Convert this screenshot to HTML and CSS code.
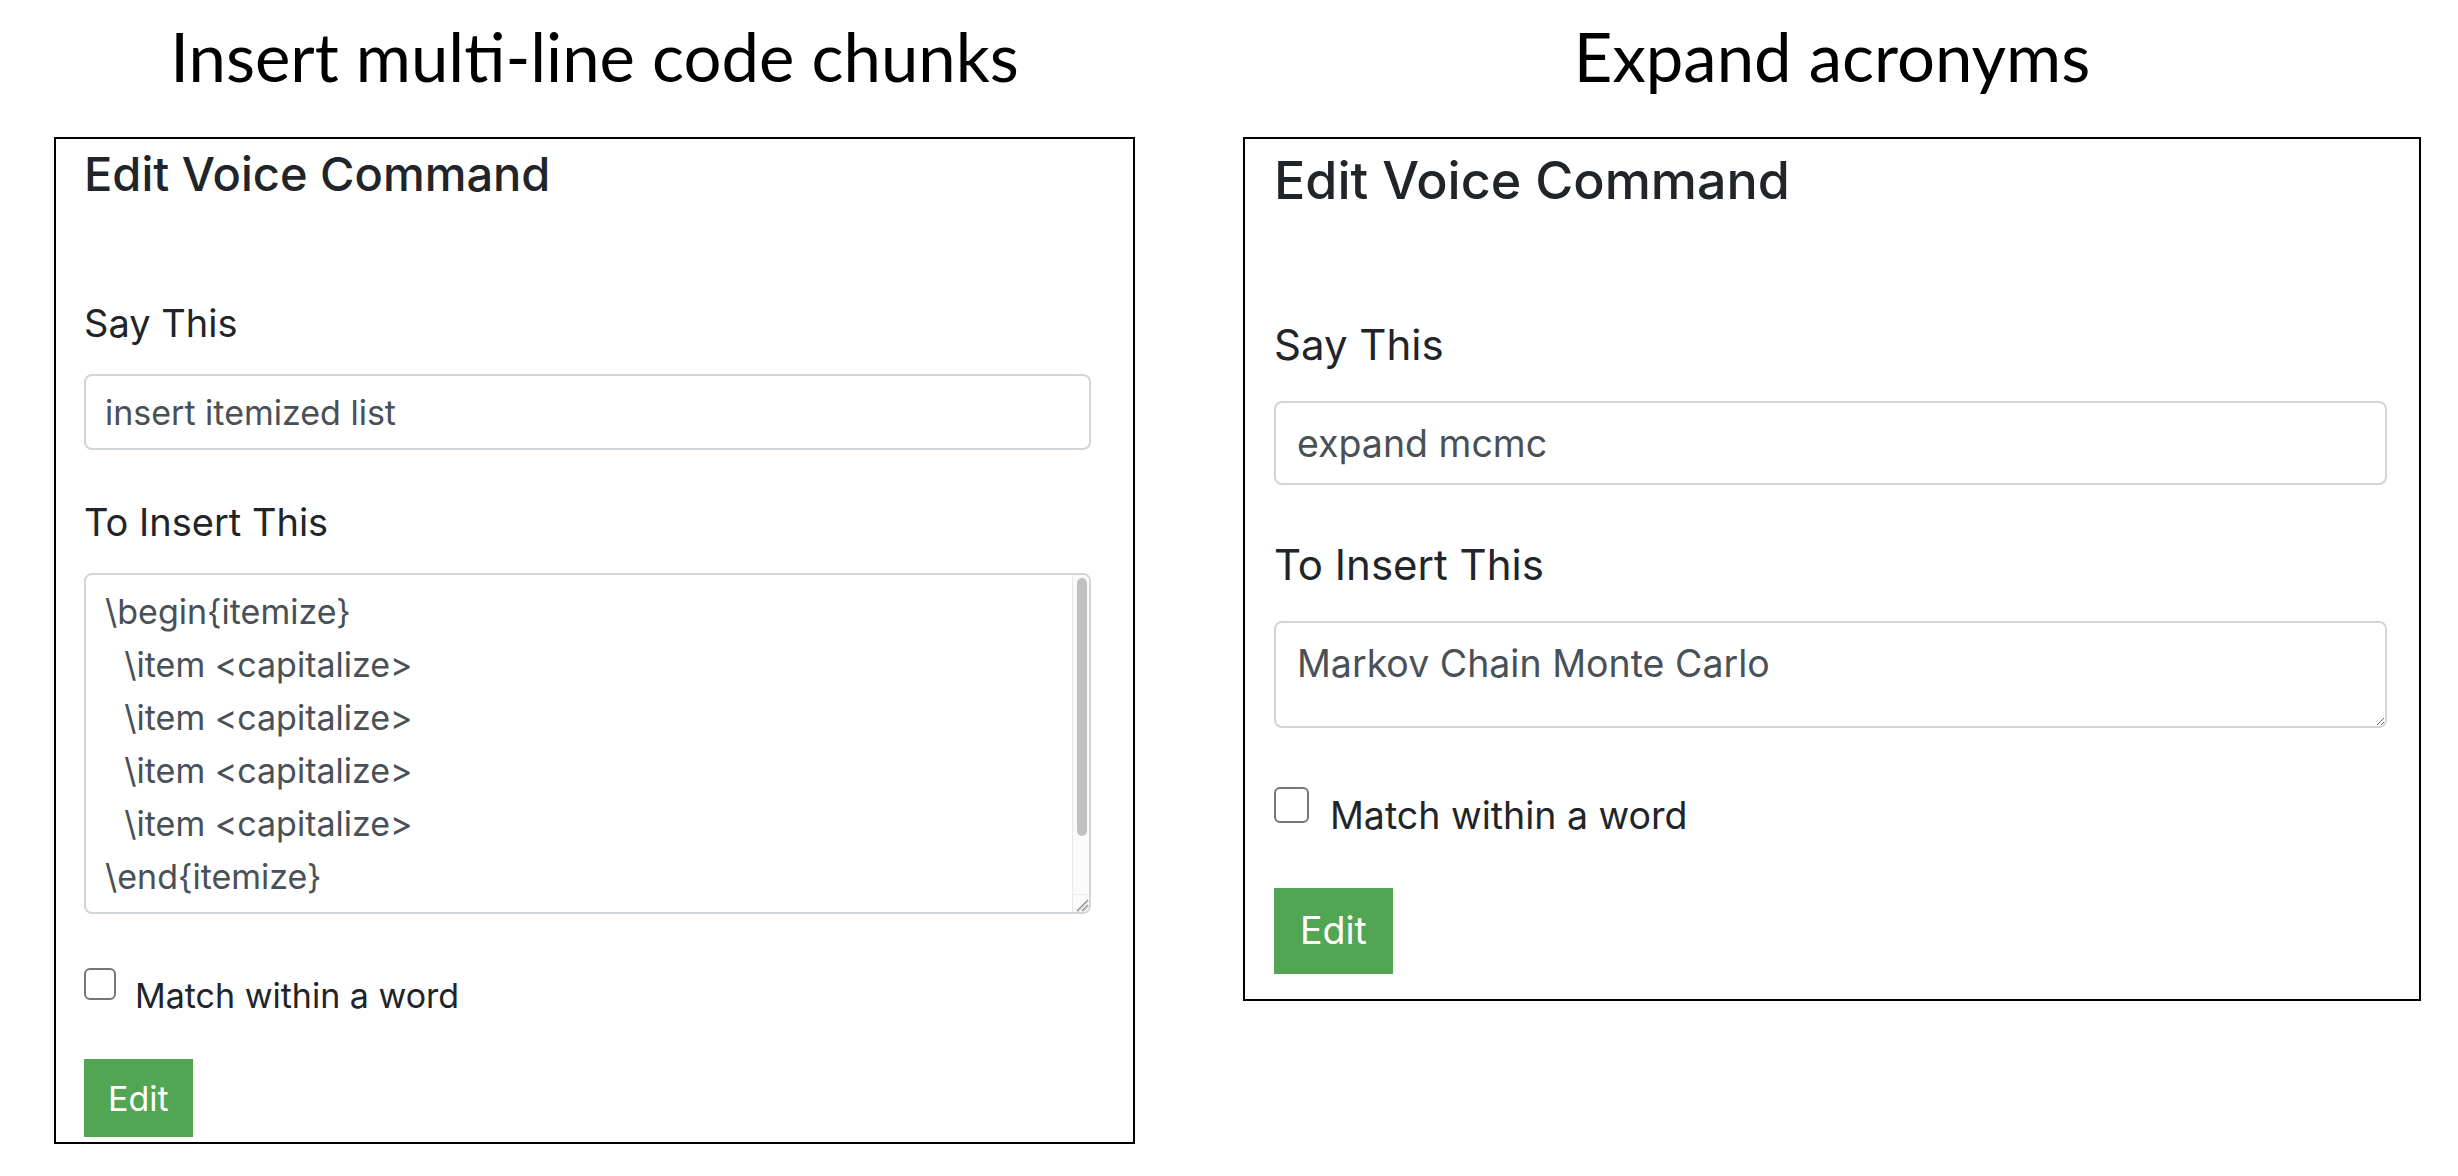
FILE: index.html
```html
<!DOCTYPE html>
<html lang="en">
<head>
<meta charset="utf-8">
<title>Voice command examples</title>
<link rel="stylesheet" href="styles.css">
</head>
<body>
<main class="page">
  <section class="demo demo--left">
    <h2 class="demo-title">Insert multi-line code chunks</h2>
    <form class="card">
      <h4 class="card-title">Edit Voice Command</h4>
      <div class="form-group">
        <label class="form-label" for="say-1">Say This</label>
        <input class="form-control" id="say-1" type="text" value="insert itemized list">
      </div>
      <div class="form-group">
        <label class="form-label" for="insert-1">To Insert This</label>
        <div class="textarea-wrap">
          <textarea class="form-control form-textarea form-textarea--scroll" id="insert-1">\begin{itemize}
  \item &lt;capitalize&gt;
  \item &lt;capitalize&gt;
  \item &lt;capitalize&gt;
  \item &lt;capitalize&gt;
\end{itemize}

</textarea>
          <div class="fake-scrollbar" aria-hidden="true"><div class="fake-thumb"></div></div>
          <div class="fake-corner" aria-hidden="true">
            <svg class="resize-glyph" viewBox="0 0 16 16" width="16" height="16">
              <line x1="4" y1="15" x2="15" y2="4" stroke="#8c8c8c" stroke-width="1.2"/>
              <line x1="9" y1="15" x2="15" y2="9" stroke="#8c8c8c" stroke-width="1.2"/>
              <line x1="5" y1="16" x2="16" y2="5" stroke="#d8d8d8" stroke-width="1"/>
              <line x1="10" y1="16" x2="16" y2="10" stroke="#d8d8d8" stroke-width="1"/>
            </svg>
          </div>
        </div>
      </div>
      <div class="form-check">
        <input class="check-input" type="checkbox" id="match-1">
        <label class="check-label" for="match-1">Match within a word</label>
      </div>
      <button class="btn" type="button">Edit</button>
    </form>
  </section>

  <section class="demo demo--right">
    <h2 class="demo-title">Expand acronyms</h2>
    <form class="card">
      <h4 class="card-title">Edit Voice Command</h4>
      <div class="form-group">
        <label class="form-label" for="say-2">Say This</label>
        <input class="form-control" id="say-2" type="text" value="expand mcmc">
      </div>
      <div class="form-group">
        <label class="form-label" for="insert-2">To Insert This</label>
        <textarea class="form-control form-textarea" id="insert-2">Markov Chain Monte Carlo</textarea>
      </div>
      <div class="form-check">
        <input class="check-input" type="checkbox" id="match-2">
        <label class="check-label" for="match-2">Match within a word</label>
      </div>
      <button class="btn" type="button">Edit</button>
    </form>
  </section>
</main>
</body>
</html>
```

FILE: styles.css
```css
* {
  box-sizing: border-box;
}

html,
body {
  margin: 0;
  background: #ffffff;
}

body {
  font-family: Inter, "Noto Sans", "Liberation Sans", sans-serif;
  color: #212529;
}

.page {
  display: flex;
  align-items: flex-start;
  gap: 108px;
  padding-left: 54px;
}

.demo {
  display: flex;
  flex-direction: column;
}

.demo--left {
  width: 1081px;
}

.demo--right {
  width: 1178px;
}

.demo-title {
  margin: 0 0 41px;
  padding-top: 16px;
  font-family: Lato, "Open Sans", sans-serif;
  font-size: 67px;
  font-weight: 400;
  line-height: 80px;
  color: #000000;
  text-align: center;
}

.card {
  display: flex;
  flex-direction: column;
  align-items: stretch;
  border: 2px solid #000000;
  background: #ffffff;
}

.card-title {
  margin: 0;
  font-weight: 500;
  color: #212529;
}

.form-label {
  display: block;
  font-weight: 400;
  color: #212529;
}

.form-control {
  display: block;
  width: 100%;
  margin: 0;
  border: 2px solid #d0d5da;
  border-radius: 8px;
  background: #ffffff;
  font-family: Inter, "Noto Sans", "Liberation Sans", sans-serif;
  color: #495057;
  outline: none;
}

.form-textarea {
  resize: vertical;
  overflow-y: auto;
}

.form-textarea--scroll {
  overflow-y: hidden;
}

.textarea-wrap {
  position: relative;
}

.fake-scrollbar {
  position: absolute;
  top: 2px;
  right: 2px;
  width: 17px;
  height: 319px;
  background: #fafafa;
  border-left: 1px solid #e8e8e8;
  border-top-right-radius: 6px;
  pointer-events: none;
}

.fake-thumb {
  position: absolute;
  top: 3px;
  left: 4px;
  width: 10px;
  height: 258px;
  border-radius: 5px;
  background: #c1c1c1;
}

.fake-corner {
  position: absolute;
  right: 2px;
  bottom: 2px;
  width: 17px;
  height: 18px;
  display: flex;
  align-items: flex-end;
  justify-content: flex-end;
  background: #fafafa;
  border-left: 1px solid #e8e8e8;
  border-top: 1px solid #ededed;
  border-bottom-right-radius: 6px;
  pointer-events: none;
}

.resize-glyph {
  display: block;
}

.form-check {
  display: flex;
  align-items: flex-start;
}

.check-input {
  appearance: none;
  -webkit-appearance: none;
  flex: none;
  border: 2px solid #767676;
  border-radius: 6px;
  background: #ffffff;
}

.check-label {
  color: #212529;
}

.btn {
  align-self: flex-start;
  border: none;
  border-radius: 0;
  background: #52a553;
  color: #ffffff;
  font-family: Inter, "Noto Sans", "Liberation Sans", sans-serif;
  font-weight: 400;
  cursor: pointer;
}

/* Left card sizes */
.demo--left .card {
  padding: 7px 42px 5px 28px;
}

.demo--left .card-title {
  font-size: 47px;
  line-height: 56px;
  margin-bottom: 93px;
}

.demo--left .form-label {
  font-size: 38px;
  line-height: 57px;
  margin-bottom: 22px;
}

.demo--left .form-group {
  margin-bottom: 44px;
}

.demo--left .form-control {
  height: 76px;
  padding: 0 19px;
  font-size: 34px;
  line-height: 51px;
}

.demo--left .form-textarea {
  height: 341px;
  padding: 10px 38px 10px 19px;
  line-height: 53px;
}

.demo--left .form-check {
  gap: 19px;
  margin-bottom: 38px;
}

.demo--left .check-input {
  width: 32px;
  height: 32px;
  margin: 10px 0 0;
}

.demo--left .check-label {
  margin-top: 12px;
  font-size: 34px;
  line-height: 51px;
}

.demo--left .btn {
  height: 78px;
  padding: 0 24px;
  font-size: 34px;
  line-height: 51px;
}

/* Right card sizes */
.demo--right .card {
  padding: 11px 32px 25px 29px;
}

.demo--right .card-title {
  font-size: 52px;
  line-height: 62px;
  margin-bottom: 101px;
}

.demo--right .form-label {
  font-size: 42px;
  line-height: 63px;
  margin-bottom: 25px;
}

.demo--right .form-group {
  margin-bottom: 48px;
}

.demo--right .form-control {
  height: 84px;
  padding: 0 21px;
  font-size: 37.5px;
  line-height: 56px;
}

.demo--right .form-textarea {
  height: 107px;
  padding: 12px 21px;
  line-height: 58px;
}

.demo--right .form-check {
  gap: 21px;
  margin-bottom: 44px;
}

.demo--right .check-input {
  width: 35px;
  height: 36px;
  margin: 11px 0 0;
}

.demo--right .check-label {
  margin-top: 12px;
  font-size: 37.5px;
  line-height: 56px;
}

.demo--right .btn {
  height: 86px;
  padding: 0 26px;
  font-size: 37.5px;
  line-height: 56px;
}
```
